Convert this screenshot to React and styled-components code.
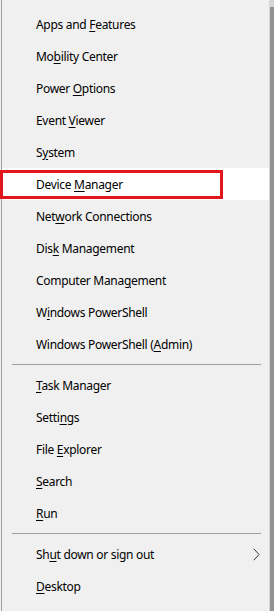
import React from 'react';
import styled, { createGlobalStyle } from 'styled-components';

const Global = createGlobalStyle`
  html, body { margin: 0; padding: 0; background: #f0f0f0; }
  body { font-family: "Noto Sans", "Open Sans", sans-serif; }
`;

const Frame = styled.div`
  display: flex;
  width: 274px;
  height: 611px;
  background: #f0f0f0;
  overflow: hidden;
`;

const Menu = styled.div`
  display: flex;
  flex-direction: column;
  width: 267px;
  margin-left: 1px;
  padding-top: 8px;
  border-left: 1px solid #a0a0a0;
  border-right: 1px solid #d6d6d6;
  background: #f0f0f0;
`;

const Shadow = styled.div`
  width: 4px;
  background: linear-gradient(to bottom, #d6d6d6 0 7px, #929292 7px);
`;

const Item = styled.div`
  position: relative;
  display: flex;
  align-items: center;
  justify-content: space-between;
  box-sizing: border-box;
  height: 32px;
  padding: 2px 9px 0 34px;
  background: ${p => (p.$active ? '#ffffff' : 'transparent')};
  color: #000;
  font-size: 12px;
  letter-spacing: -0.3px;
  line-height: 16px;
  white-space: nowrap;
`;

const Key = styled.span`
  text-decoration: underline;
  text-decoration-thickness: 1px;
  text-underline-offset: 2px;
`;

const Separator = styled.div`
  padding: 4px 8px 4px 10px;
  &::after {
    content: '';
    display: block;
    height: 1px;
    background: #9e9e9e;
  }
`;

const Highlight = styled.div`
  position: absolute;
  left: -2px;
  top: 2px;
  width: 223px;
  height: 29px;
  box-sizing: border-box;
  border: 3px solid #e3161c;
  pointer-events: none;
`;

const ChevronWrap = styled.span`
  display: flex;
  margin-top: -2px;
`;

const Chevron = () => (
  <ChevronWrap>
    <svg width="7" height="13" viewBox="0 0 7 13" aria-hidden="true">
      <polyline points="0.8,0.8 6,6.5 0.8,12.2" fill="none" stroke="#3a3a3a" strokeWidth="1" />
    </svg>
  </ChevronWrap>
);

const L = (before, key, after) => (
  <span>
    {before}
    <Key>{key}</Key>
    {after}
  </span>
);

export default function App() {
  return (
    <>
      <Global />
      <Frame>
        <Menu>
          <Item>{L('Apps and ', 'F', 'eatures')}</Item>
          <Item>{L('Mo', 'b', 'ility Center')}</Item>
          <Item>{L('Power ', 'O', 'ptions')}</Item>
          <Item>{L('Event ', 'V', 'iewer')}</Item>
          <Item>{L('S', 'y', 'stem')}</Item>
          <Item $active>
            {L('Device ', 'M', 'anager')}
            <Highlight />
          </Item>
          <Item>{L('Net', 'w', 'ork Connections')}</Item>
          <Item>{L('Dis', 'k', ' Management')}</Item>
          <Item>{L('Computer Mana', 'g', 'ement')}</Item>
          <Item>{L('W', 'i', 'ndows PowerShell')}</Item>
          <Item>{L('Windows PowerShell (', 'A', 'dmin)')}</Item>
          <Separator />
          <Item>{L('', 'T', 'ask Manager')}</Item>
          <Item>{L('Setti', 'n', 'gs')}</Item>
          <Item>{L('File ', 'E', 'xplorer')}</Item>
          <Item>{L('', 'S', 'earch')}</Item>
          <Item>{L('', 'R', 'un')}</Item>
          <Separator />
          <Item>
            {L('Sh', 'u', 't down or sign out')}
            <Chevron />
          </Item>
          <Item>{L('', 'D', 'esktop')}</Item>
        </Menu>
        <Shadow />
      </Frame>
    </>
  );
}
